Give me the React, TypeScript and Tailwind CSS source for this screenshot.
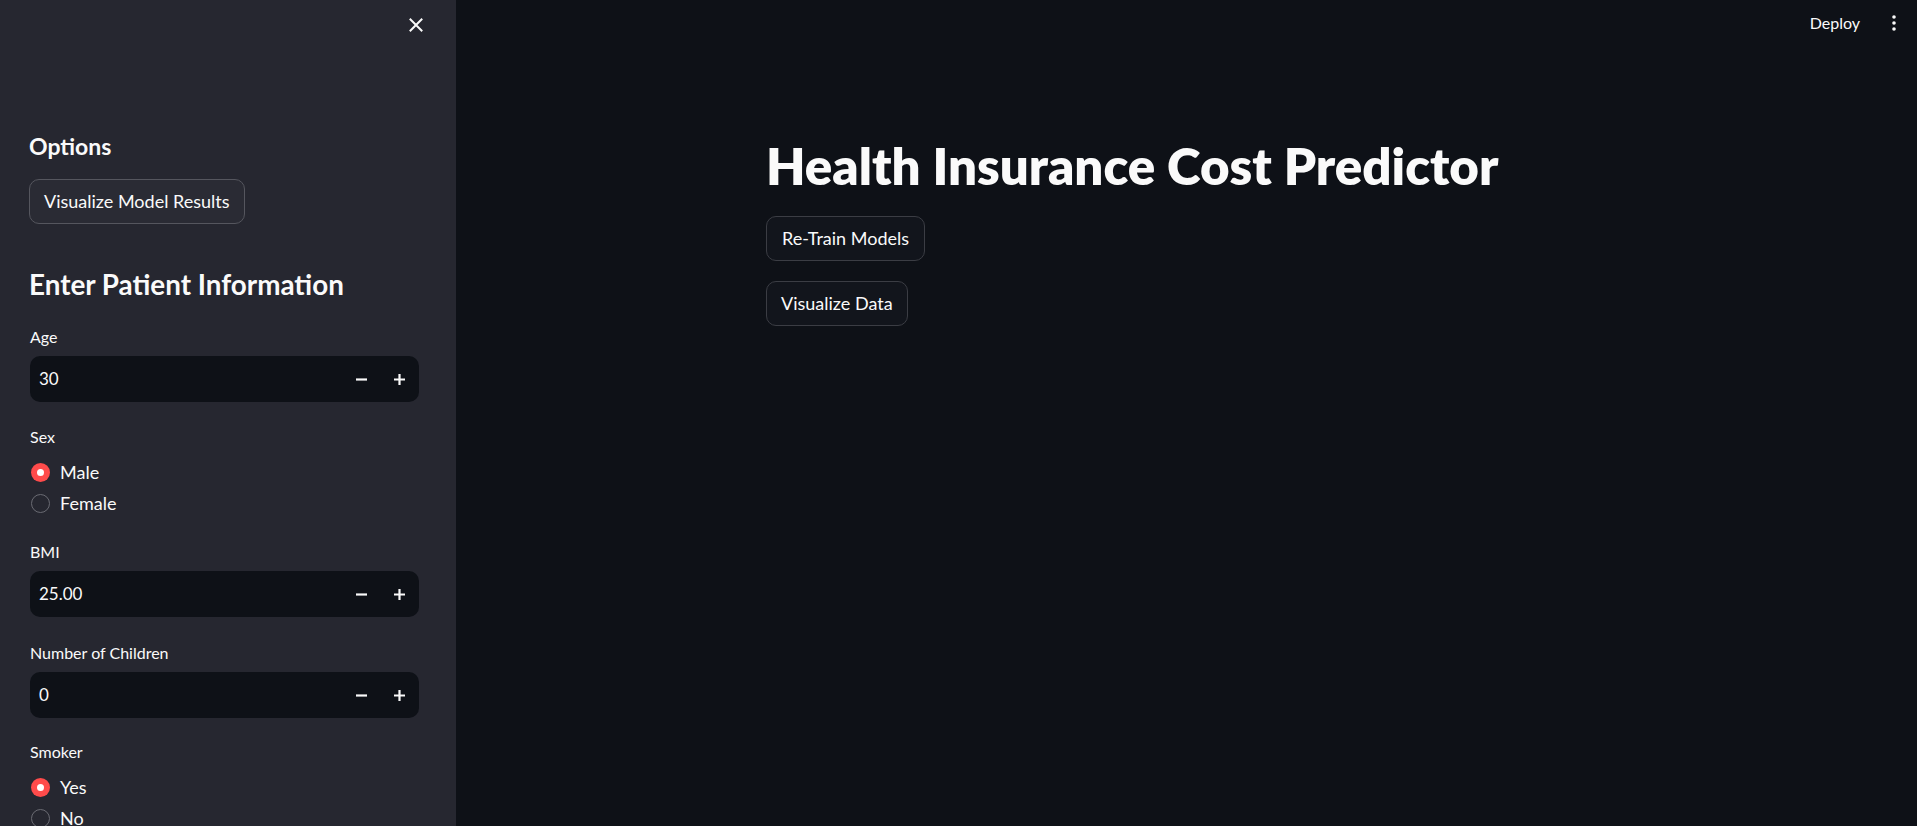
import React from "react";

const font = { fontFamily: "Lato, 'Noto Sans', sans-serif" };

const CloseIcon = () => (
    <svg width="14" height="14" viewBox="0 0 14 14" fill="none" stroke="#fafafa" strokeWidth="2" strokeLinecap="square">
        <path d="M1.5 1.5 L12.5 12.5 M12.5 1.5 L1.5 12.5" />
    </svg>
);

const Stepper = () => (
    <div className="flex items-center h-full">
        <button className="w-[38px] h-full flex items-center justify-center">
            <svg width="11" height="11" viewBox="0 0 11 11" stroke="#fafafa" strokeWidth="2.2">
                <path d="M0 5.5 H11" />
            </svg>
        </button>
        <button className="w-[38px] h-full flex items-center justify-center">
            <svg width="11" height="11" viewBox="0 0 11 11" stroke="#fafafa" strokeWidth="2.2">
                <path d="M0 5.5 H11 M5.5 0 V11" />
            </svg>
        </button>
    </div>
);

interface NumberFieldProps {
    label: string;
    value: string;
    top: string;
}

const NumberField = ({ label, value, top }: NumberFieldProps) => (
    <div className={top}>
        <div className="h-[22px] flex items-center text-[16px] text-[#fafafa]">{label}</div>
        <div className="mt-[8px] h-[46px] rounded-[10px] bg-[#0e1117] flex items-center justify-between pl-[9px] pr-[1px]">
            <span className="text-[17px] text-[#fafafa]">{value}</span>
            <Stepper />
        </div>
    </div>
);

interface RadioGroupProps {
    label: string;
    options: string[];
    selected: number;
    top: string;
}

const RadioGroup = ({ label, options, selected, top }: RadioGroupProps) => (
    <div className={top}>
        <div className="h-[22px] flex items-center text-[16px] text-[#fafafa]">{label}</div>
        <div className="mt-[11px] flex flex-col gap-[5px]">
            {options.map((opt, i) => (
                <div key={opt} className="h-[26px] flex items-center gap-[10px]">
                    {i === selected ? (
                        <span className="w-[19px] h-[19px] ml-[1px] rounded-full bg-[#ff4b4b] flex items-center justify-center">
                            <span className="w-[7px] h-[7px] rounded-full bg-white" />
                        </span>
                    ) : (
                        <span className="w-[19px] h-[19px] ml-[1px] rounded-full border border-[#6a6b73]" />
                    )}
                    <span className="text-[18px] text-[#fafafa]">{opt}</span>
                </div>
            ))}
        </div>
    </div>
);

export default function App() {
    return (
        <div style={font} className="w-full h-[826px] flex overflow-hidden bg-[#0e1117]">
            {/* Sidebar */}
            <aside className="w-[456px] shrink-0 h-full bg-[#262730] pl-[30px] pr-[37px] overflow-hidden">
                <div className="h-[50px] flex items-center justify-end -mr-[4px]">
                    <CloseIcon />
                </div>

                <h3 className="mt-[81px] h-[30px] flex items-center text-[23px] font-bold text-[#fafafa] -ml-[1px]">Options</h3>

                <button className="mt-[18px] h-[45px] px-[14px] rounded-[10px] border border-[#55565e] bg-[#2a2b34] text-[18px] text-[#fafafa] -ml-[1px]">
                    Visualize Model Results
                </button>

                <h2 className="mt-[43px] h-[36px] flex items-center text-[27.8px] font-bold text-[#fafafa] -ml-[1px]">
                    Enter Patient Information
                </h2>

                <NumberField label="Age" value="30" top="mt-[23px]" />
                <RadioGroup label="Sex" options={["Male", "Female"]} selected={0} top="mt-[24px]" />
                <NumberField label="BMI" value="25.00" top="mt-[25px]" />
                <NumberField label="Number of Children" value="0" top="mt-[25px]" />
                <RadioGroup label="Smoker" options={["Yes", "No"]} selected={0} top="mt-[23px]" />
            </aside>

            {/* Main */}
            <main className="flex-1 h-full flex flex-col">
                <header className="h-[46px] flex items-center justify-end pr-[21px] gap-[32px]">
                    <span className="text-[16px] text-[#fafafa]">Deploy</span>
                    <svg width="4" height="16" viewBox="0 0 4 16" fill="#fafafa">
                        <circle cx="2" cy="2" r="1.8" />
                        <circle cx="2" cy="8" r="1.8" />
                        <circle cx="2" cy="14" r="1.8" />
                    </svg>
                </header>

                <div className="w-[841px] mx-auto">
                    <h1 className="mt-[90px] h-[60px] flex items-center text-[51px] font-extrabold text-[#fafafa]">
                        Health Insurance Cost Predictor
                    </h1>
                    <div className="mt-[20px] flex flex-col items-start gap-[20px]">
                        <button className="h-[45px] px-[15px] rounded-[10px] border border-[#3b3d44] bg-[#12151c] text-[18px] text-[#fafafa]">
                            Re-Train Models
                        </button>
                        <button className="h-[45px] px-[14px] rounded-[10px] border border-[#3b3d44] bg-[#12151c] text-[18px] text-[#fafafa]">
                            Visualize Data
                        </button>
                    </div>
                </div>
            </main>
        </div>
    );
}
